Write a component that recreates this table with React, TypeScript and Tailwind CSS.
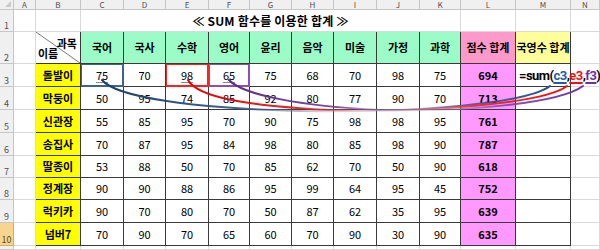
import type { ReactNode } from 'react';

const COLS = ['A', 'B', 'C', 'D', 'E', 'F', 'G', 'H', 'I', 'J', 'K', 'L', 'M', 'N'];
const SUBJECTS = ['국어', '국사', '수학', '영어', '윤리', '음악', '미술', '가정', '과학'];

const STUDENTS = [
    { name: '돌발이', scores: [75, 70, 98, 65, 75, 68, 70, 98, 75], total: 694 },
    { name: '막둥이', scores: [50, 95, 74, 85, 92, 80, 77, 90, 70], total: 713 },
    { name: '신관장', scores: [55, 85, 95, 70, 90, 75, 98, 98, 95], total: 761 },
    { name: '송집사', scores: [70, 87, 95, 84, 98, 80, 85, 98, 90], total: 787 },
    { name: '딸종이', scores: [53, 88, 50, 70, 85, 62, 70, 50, 90], total: 618 },
    { name: '정계장', scores: [90, 90, 88, 86, 95, 99, 64, 95, 45], total: 752 },
    { name: '럭키카', scores: [90, 70, 80, 70, 50, 87, 62, 35, 95], total: 639 },
    { name: '넘버7', scores: [70, 90, 70, 65, 60, 70, 90, 30, 90], total: 635 },
];

// selected refs in row 3 (C3, E3, F3)
const REF_RING: Record<number, string> = {
    0: 'shadow-[inset_0_0_0_1px_#41618f] border-r-[#41618f] border-b-[#41618f]',
    2: 'shadow-[inset_0_0_0_1px_#ff2020] border-r-[#ff2020] border-b-[#ff2020]',
    3: 'shadow-[inset_0_0_0_1px_#8a4fb8] border-r-[#8a4fb8] border-b-[#8a4fb8]',
};

const LIGHT = 'border-r border-b border-r-[#d9d9d9] border-b-[#d9d9d9]';
const DARK = 'border-r border-b border-r-[#3a3a3a] border-b-[#3a3a3a]';

function Cell({ className = '', children }: { className?: string; children?: ReactNode }) {
    return <div className={`flex items-center justify-center min-w-0 ${className}`}>{children}</div>;
}

function RowHead({ n, active }: { n: number; active?: boolean }) {
    return (
        <div
            className={`flex items-end justify-center overflow-hidden pb-[1px] text-[9px] leading-none border-r border-b ${
                active
                    ? 'bg-[#f8d58e] text-[#5a4a20] border-r-[#e2a94a] border-b-[#e2a94a]'
                    : 'bg-[#f0f0f0] text-[#4f4f4f] border-r-[#c6c6c6] border-b-[#c6c6c6]'
            }`}
        >
            {n < 11 && n}
        </div>
    );
}

export default function App() {
    return (
        <div className="w-[600px] h-[250px] overflow-hidden bg-white relative font-['Noto_Sans_CJK_KR','Malgun_Gothic',sans-serif] text-black">
            <div className="grid grid-cols-[14px_22px_45px_43px_42px_43px_41px_42px_42px_43px_43px_41px_55px_55px_29px] grid-rows-[10px_22px_32px_23px_23px_23px_23px_22px_22px_23px_23px_4px]">
                {/* column letters */}
                <div className="bg-[#f0f0f0] border-r border-b border-[#c6c6c6] relative">
                    <div className="absolute right-[2px] bottom-[2px] w-0 h-0 border-l-[6px] border-l-transparent border-b-[6px] border-b-[#c9c9c9]" />
                </div>
                {COLS.map(c => (
                    <div
                        key={c}
                        className="flex items-center justify-center text-[8px] leading-none text-[#4f4f4f] bg-[#f0f0f0] border-r border-b border-[#c6c6c6]"
                    >
                        {c}
                    </div>
                ))}

                {/* row 1 : title */}
                <RowHead n={1} />
                <Cell className={LIGHT} />
                <Cell className={`${LIGHT} border-b-[#3a3a3a]`} />
                <Cell className={`col-span-9 ${LIGHT} border-b-[#3a3a3a] text-[12px] font-bold tracking-[0.2px]`}>
                    ≪ SUM 함수를 이용한 합계 ≫
                </Cell>
                <Cell className={`${LIGHT} border-b-[#3a3a3a]`} />
                <Cell className={`${LIGHT} border-b-[#3a3a3a]`} />
                <Cell className={LIGHT} />

                {/* row 2 : headers */}
                <RowHead n={2} />
                <Cell className={`${LIGHT} border-r-[#3a3a3a]`} />
                <div className={`relative ${DARK} text-[11px] font-bold leading-none`}>
                    <svg className="absolute inset-0 w-full h-full" viewBox="0 0 44 31" preserveAspectRatio="none">
                        <line x1="0" y1="0" x2="44" y2="31" stroke="#555" strokeWidth="0.8" />
                    </svg>
                    <span className="absolute right-[3px] top-[6px]">과목</span>
                    <span className="absolute left-[2px] bottom-[4px]">이름</span>
                </div>
                {SUBJECTS.map(s => (
                    <Cell key={s} className={`${DARK} bg-[#9cfcc8] text-[11px] font-bold`}>
                        {s}
                    </Cell>
                ))}
                <Cell className={`${DARK} bg-[#ff99cc] text-[11px] font-bold`}>점수 합계</Cell>
                <Cell className={`${DARK} bg-[#ffff99] text-[11px] font-bold`}>국영수 합계</Cell>
                <Cell className={LIGHT} />

                {/* rows 3-10 */}
                {STUDENTS.map((st, i) => {
                    const row = i + 3;
                    return [
                        <RowHead key={`h${row}`} n={row} active={row === 10} />,
                        <Cell key={`a${row}`} className={`${LIGHT} border-r-[#3a3a3a]`} />,
                        <Cell key={`b${row}`} className={`${DARK} bg-[#ffff00] text-[11px] font-bold`}>
                            {st.name}
                        </Cell>,
                        ...st.scores.map((v, j) => (
                            <Cell
                                key={`s${row}-${j}`}
                                className={`${DARK} text-[11px] ${row === 3 && REF_RING[j] ? REF_RING[j] : ''}`}
                            >
                                <span className={row === 3 && REF_RING[j] ? 'underline decoration-[#8a8a8a] underline-offset-2' : ''}>
                                    {v}
                                </span>
                            </Cell>
                        )),
                        <Cell key={`l${row}`} className={`${DARK} bg-[#ff99ff] text-[11px] font-bold`}>
                            {st.total}
                        </Cell>,
                        <Cell
                            key={`m${row}`}
                            className={`${DARK} ${row === 3 ? 'justify-start pl-[3px] overflow-visible whitespace-nowrap relative z-10' : ''}`}
                        >
                            {row === 3 && (
                                <span className="font-['Roboto','Liberation_Sans',sans-serif] text-[13px] font-bold leading-none tracking-[-0.55px]">
                                    =sum(
                                    <span className="text-[#1f5fa5] underline decoration-[#1f5fa5] decoration-2 underline-offset-2">c3</span>,
                                    <span className="text-[#ee1111] underline decoration-[#ee1111] decoration-2 underline-offset-2">e3</span>,
                                    <span className="text-[#7030a0] underline decoration-[#7030a0] decoration-2 underline-offset-2">f3</span>)
                                </span>
                            )}
                        </Cell>,
                        <Cell key={`n${row}`} className={LIGHT} />,
                    ];
                })}

                {/* row 11 (partial) */}
                <RowHead n={11} />
                {COLS.map(c => (
                    <Cell key={`r11${c}`} className={LIGHT} />
                ))}
            </div>

            {/* connector curves from referenced cells to the formula */}
            <svg className="absolute inset-0 pointer-events-none z-20" width="600" height="250" viewBox="0 0 600 250">
                <defs>
                    <linearGradient id="gBlue" gradientUnits="userSpaceOnUse" x1="102" y1="0" x2="556" y2="0">
                        <stop offset="0" stopColor="#1e3f6e" />
                        <stop offset="0.3" stopColor="#2d5083" stopOpacity="0.9" />
                        <stop offset="0.55" stopColor="#8ea3c4" stopOpacity="0.2" />
                        <stop offset="0.78" stopColor="#3a5f92" stopOpacity="0.85" />
                        <stop offset="1" stopColor="#1f4f88" />
                    </linearGradient>
                    <linearGradient id="gRed" gradientUnits="userSpaceOnUse" x1="188" y1="0" x2="574" y2="0">
                        <stop offset="0" stopColor="#e00000" />
                        <stop offset="0.3" stopColor="#e41515" stopOpacity="0.9" />
                        <stop offset="0.5" stopColor="#f08080" stopOpacity="0.2" />
                        <stop offset="0.75" stopColor="#ff1a1a" stopOpacity="0.9" />
                        <stop offset="1" stopColor="#ff0000" />
                    </linearGradient>
                    <linearGradient id="gPurple" gradientUnits="userSpaceOnUse" x1="229" y1="0" x2="592" y2="0">
                        <stop offset="0" stopColor="#5b2a86" />
                        <stop offset="0.3" stopColor="#6e3a9c" stopOpacity="0.9" />
                        <stop offset="0.5" stopColor="#b89ad0" stopOpacity="0.25" />
                        <stop offset="0.75" stopColor="#7a44ac" stopOpacity="0.9" />
                        <stop offset="1" stopColor="#7030a0" />
                    </linearGradient>
                </defs>
                <path d="M102 80 C116 97 190 108 300 111 C420 113 528 103 550 86" fill="none" stroke="url(#gBlue)" strokeWidth="2" strokeLinecap="round" />
                <path d="M188 80 C198 98 250 106 330 110 C430 113 545 103 567 86" fill="none" stroke="url(#gRed)" strokeWidth="2" strokeLinecap="round" />
                <path d="M229 80 C243 95 300 106 380 110 C470 112 560 103 583 86" fill="none" stroke="url(#gPurple)" strokeWidth="2" strokeLinecap="round" />
            </svg>
        </div>
    );
}
